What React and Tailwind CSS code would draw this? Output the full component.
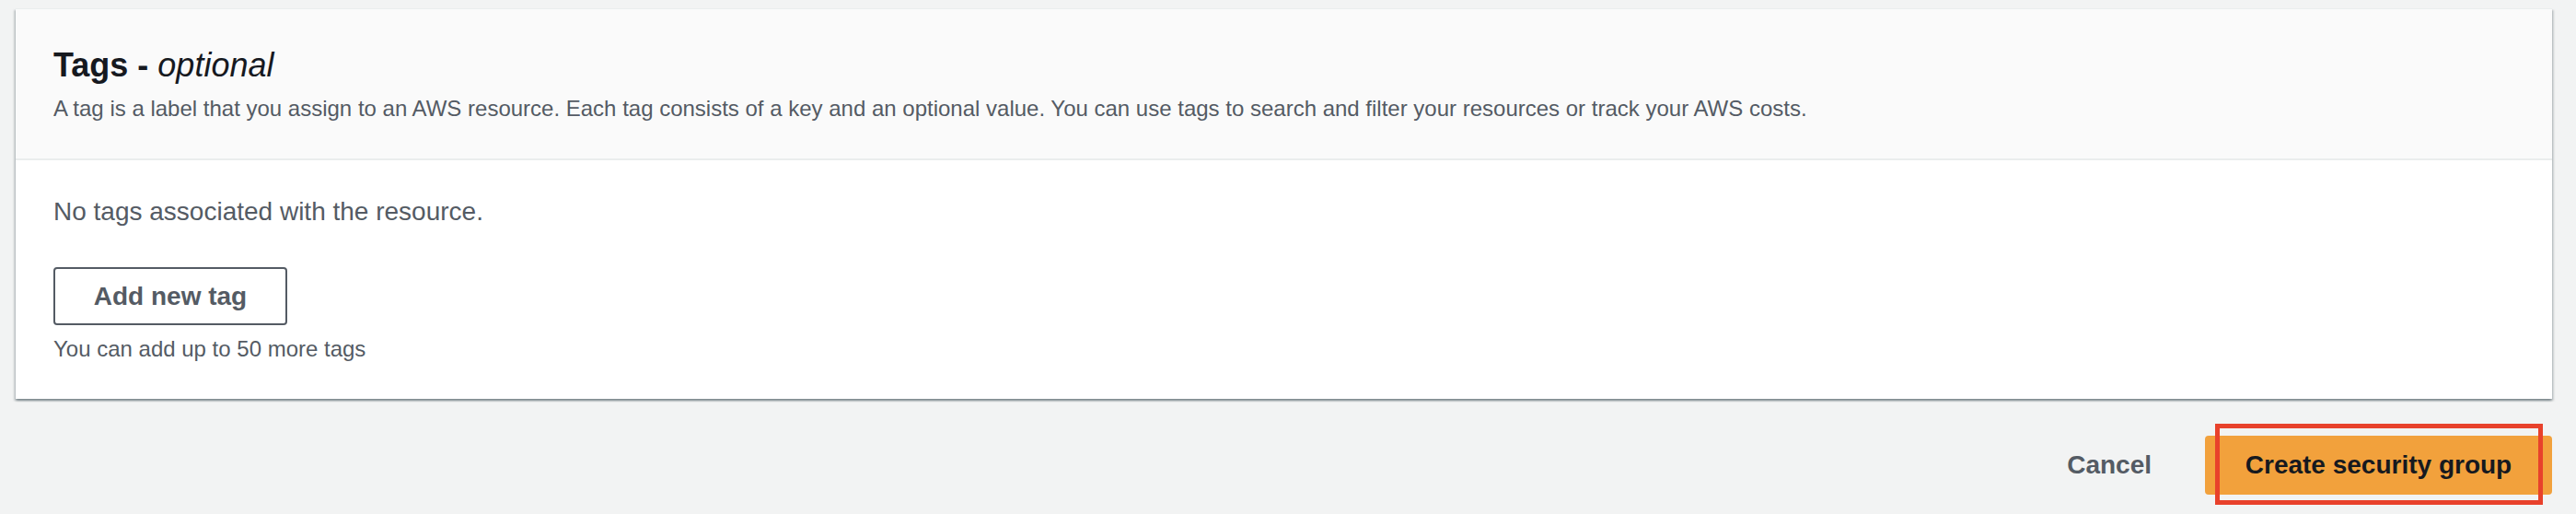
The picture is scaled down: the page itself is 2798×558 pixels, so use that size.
import React from "react";

const font = { fontFamily: '"Liberation Sans", Arial, sans-serif' };

const TagsPanel = () => {
  return (
    <div className="bg-white border-t border-[#eaeded] shadow-[0_2px_2px_0_rgba(0,28,36,0.3),2px_2px_2px_0_rgba(0,28,36,0.15),-2px_2px_2px_0_rgba(0,28,36,0.15)]">
      <div className="bg-[#fafafa] border-b-2 border-[#eaeded] pl-[41px] pr-[40px] pt-[39px] pb-[38px]">
        <h2 className="text-[36px] leading-[44px] font-bold text-[#16191f]">
          Tags - <i className="font-normal">optional</i>
        </h2>
        <p className="mt-[9px] text-[24px] leading-[32px] text-[#545b64]">
          A tag is a label that you assign to an AWS resource. Each tag consists of a key and an optional value. You can use tags to search and filter your resources or track your AWS costs.
        </p>
      </div>

      <div className="pl-[41px] pr-[40px] pt-[38px] pb-[38px]">
        <p className="text-[28px] leading-[36px] text-[#545b64]">
          No tags associated with the resource.
        </p>
        <button className="mt-[42px] w-[254px] h-[63px] border-2 border-[#545b64] rounded-[4px] bg-white text-[28px] font-bold text-[#545b64] flex items-center justify-center">
          Add new tag
        </button>
        <p className="mt-[10px] text-[24px] leading-[32px] text-[#545b64]">
          You can add up to 50 more tags
        </p>
      </div>
    </div>
  );
};

const App = () => {
  return (
    <div
      className="w-[2798px] h-[558px] bg-[#f2f3f3] pt-[9px] pl-[17px] pr-[26px]"
      style={font}
    >
      <TagsPanel />

      <div className="mt-[40px] flex justify-end items-center gap-[58px]">
        <button className="text-[28px] font-bold text-[#545b64]">Cancel</button>
        {/* highlighted primary action */}
        <div className="relative">
          <button className="w-[377px] h-[64px] rounded-[4px] bg-[#f2a13c] text-[28px] font-bold text-[#16191f] flex items-center justify-center">
            Create security group
          </button>
          <div className="absolute left-[11px] right-[10px] top-[-13px] bottom-[-11px] border-[5px] border-[#e8412b] pointer-events-none"></div>
        </div>
      </div>
    </div>
  );
};

export default App;
